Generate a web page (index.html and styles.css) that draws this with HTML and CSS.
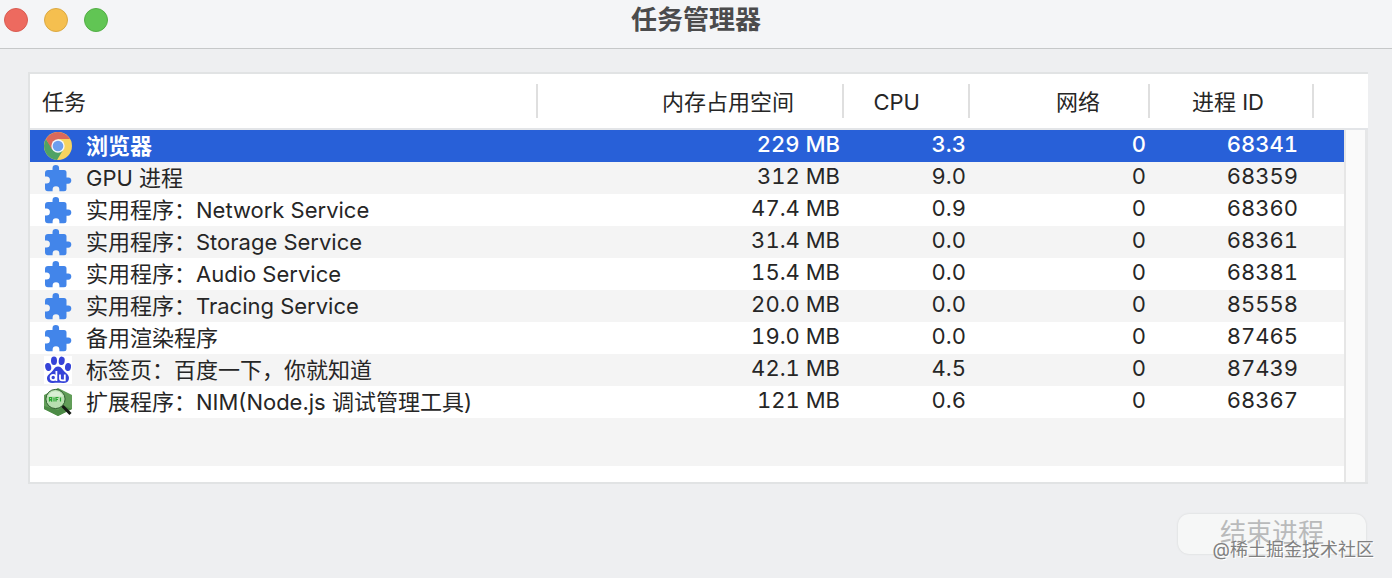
FILE: index.html
```html
<!DOCTYPE html>
<html lang="zh-CN">
<head>
<meta charset="utf-8">
<title>任务管理器</title>
<link rel="stylesheet" href="styles.css">
</head>
<body>
<svg class="defs" aria-hidden="true">
  <symbol id="puzzle" viewBox="0 0 28 28">
    <path fill="#4285ea" d="M4 6h4.500V4.400a3.300 3.300 0 0 1 6.600 0V6H20q2.500 0 2.500 2.500v5h1.700a3.100 3.100 0 0 1 0 6.200h-1.700v5q0 2.500-2.500 2.500h-4.600v-1.500a3.400 3.400 0 0 0-6.800 0v1.500H4q-3 0-3-3v-4.600h1.400a3.500 3.500 0 0 0 0-7H1V9q0-3 3-3z"/>
  </symbol>
</svg>
<header class="titlebar">
  <div class="lights">
    <button class="light close" aria-label="关闭"></button>
    <button class="light minimize" aria-label="最小化"></button>
    <button class="light expand" aria-label="缩放"></button>
  </div>
  <h1 class="title">任务管理器</h1>
</header>
<main class="content">
  <div class="frame">
    <table class="tasks">
      <colgroup>
        <col><col class="c-memory"><col class="c-cpu"><col class="c-network"><col class="c-pid"><col class="c-rest"><col class="c-scroll">
      </colgroup>
      <thead>
        <tr><th class="name" scope="col">任务</th><th scope="col">内存占用空间</th><th scope="col">CPU</th><th scope="col">网络</th><th scope="col">进程 ID</th><td class="head-rest" colspan="2"></td></tr>
      </thead>
      <tbody>
        <tr class="selected">
          <td><div class="task"><svg class="icon" viewBox="0 0 28 28"><circle cx="14" cy="14" r="14" fill="#f6d35f"/><path fill="#4fa265" d="M1.900 7A14 14 0 0 0 13 28l6.500-10.800L14 14l-5.500 3z"/><path fill="#d9695b" d="M1.900 7 8 17.500 14 7h12.100A14 14 0 0 0 1.900 7z"/><circle cx="14" cy="14" r="6.700" fill="#f4f6fa"/><circle cx="14" cy="14" r="5.300" fill="#6b9eee"/></svg>浏览器</div></td>
          <td class="num">229 MB</td><td class="num">3.3</td><td class="num">0</td><td class="num pid">68341</td><td></td>
          <td class="scroll" rowspan="11"></td>
        </tr>
        <tr><td><div class="task"><svg class="icon"><use href="#puzzle"/></svg>GPU 进程</div></td><td class="num">312 MB</td><td class="num">9.0</td><td class="num">0</td><td class="num pid">68359</td><td></td></tr>
        <tr><td><div class="task"><svg class="icon"><use href="#puzzle"/></svg>实用程序：Network Service</div></td><td class="num">47.4 MB</td><td class="num">0.9</td><td class="num">0</td><td class="num pid">68360</td><td></td></tr>
        <tr><td><div class="task"><svg class="icon"><use href="#puzzle"/></svg>实用程序：Storage Service</div></td><td class="num">31.4 MB</td><td class="num">0.0</td><td class="num">0</td><td class="num pid">68361</td><td></td></tr>
        <tr><td><div class="task"><svg class="icon"><use href="#puzzle"/></svg>实用程序：Audio Service</div></td><td class="num">15.4 MB</td><td class="num">0.0</td><td class="num">0</td><td class="num pid">68381</td><td></td></tr>
        <tr><td><div class="task"><svg class="icon"><use href="#puzzle"/></svg>实用程序：Tracing Service</div></td><td class="num">20.0 MB</td><td class="num">0.0</td><td class="num">0</td><td class="num pid">85558</td><td></td></tr>
        <tr><td><div class="task"><svg class="icon"><use href="#puzzle"/></svg>备用渲染程序</div></td><td class="num">19.0 MB</td><td class="num">0.0</td><td class="num">0</td><td class="num pid">87465</td><td></td></tr>
        <tr>
          <td><div class="task"><svg class="icon" viewBox="0 0 28 28"><path fill="#fff" d="M0 0h28v28H0z"/><g fill="#3543d8"><ellipse cx="4.200" cy="11" rx="3" ry="4" transform="rotate(-12 4.200 11)"/><ellipse cx="10" cy="4.800" rx="3" ry="4.200"/><ellipse cx="17.700" cy="4.800" rx="3" ry="4.200" transform="rotate(8 17.700 4.800)"/><ellipse cx="24" cy="11" rx="3" ry="4" transform="rotate(8 24 11)"/><path d="M14 10.500c3.500 0 4.500 3.500 7.500 6 3 2.400 4 4.500 3.300 7-.8 3-3.300 3.700-5.800 3.500-3-.4-7-.4-10 0-3 .3-5.500-.8-6-4-.4-2.800 1.500-4.600 4-6.500 3-2.500 3.500-6 7-6z"/></g><g fill="none" stroke="#fff" stroke-width="1.800"><circle cx="9.200" cy="21.500" r="2.600"/><path d="M12.400 15v9.900M16 18.500v4q0 1.900 2 1.900h2.800v-5.900"/></g></svg>标签页：百度一下，你就知道</div></td>
          <td class="num">42.1 MB</td><td class="num">4.5</td><td class="num">0</td><td class="num pid">87439</td><td></td>
        </tr>
        <tr>
          <td><div class="task"><svg class="icon" viewBox="0 0 28 28"><path fill="#619d58" d="m14 0 14 7v14l-14 7-14-7V7z"/><path fill="#4c8b46" d="m0 18 14 4 6-4 8 3-14 7-14-7z"/><circle cx="11.500" cy="11" r="9.600" fill="#b8dfb0" stroke="#315e31" stroke-width="1"/><path d="M4 8.500a8 8 0 0 1 15 0z" fill="#d9efd4"/><path d="m18.500 18 8 8" stroke="#151b14" stroke-width="3"/><path d="M5.500 13.500v-4h2.200v2H5.500m1 0 1.700 2M10 9.500v4m2 0v-4h2.500m-2.500 2h2M16.500 9.500v4" fill="none" stroke="#29a631" stroke-width="1.200"/></svg>扩展程序：NIM(Node.js 调试管理工具)</div></td>
          <td class="num">121 MB</td><td class="num">0.6</td><td class="num">0</td><td class="num pid">68367</td><td></td>
        </tr>
        <tr class="blank"><td colspan="6"></td></tr>
        <tr class="blank-end"><td colspan="6"></td></tr>
      </tbody>
    </table>
  </div>
  <footer class="actions">
    <button class="end" disabled>结束进程</button>
    <span class="watermark">@稀土掘金技术社区</span>
  </footer>
</main>
</body>
</html>
```
FILE: styles.css
```css
* { box-sizing: border-box; }
body {
  margin: 0;
  min-height: 100vh;
  background: #eeeff1;
  color: #262626;
  font: 22px/32px Inter, "Noto Sans CJK SC", sans-serif;
}
.defs { display: none; }
.titlebar {
  display: grid;
  grid-template-columns: 1fr auto 1fr;
  align-items: start;
  height: 49px;
  padding: 0 4px;
  background: #f4f5f7;
  border-bottom: 1px solid #c6c8c9;
}
.lights { display: flex; gap: 16px; padding-top: 8px; }
.light {
  width: 24px;
  height: 24px;
  padding: 0;
  border: 1px solid;
  border-radius: 50%;
}
.close { background: #ed6a5f; border-color: #d95c52; }
.minimize { background: #f5bf4f; border-color: #dba943; }
.expand { background: #61c554; border-color: #52ae45; }
.title {
  margin: 0;
  padding-top: 4px;
  color: #4b4b4c;
  font-size: 26px;
  line-height: 32px;
  font-weight: 700;
}
.content { padding: 23px 24px 0 28px; }
.frame {
  border: 2px solid #e1e3e4;
  border-right: 0;
  background: #fff;
}
.tasks {
  width: 100%;
  table-layout: fixed;
  border-collapse: separate;
  border-spacing: 0;
}
.c-memory { width: 306px; }
.c-cpu { width: 126px; }
.c-network { width: 180px; }
.c-pid { width: 164px; }
.c-rest { width: 30px; }
.c-scroll { width: 24px; }
td, th { padding: 0; }
th, .head-rest {
  height: 56px;
  border-bottom: 2px solid #e3e5e8;
}
th {
  padding: 2px 50px 0 0;
  background: linear-gradient(#dfdfdf, #dfdfdf) right center / 2px 34px no-repeat;
  text-align: right;
  font-weight: 400;
}
th.name { padding: 2px 0 0 12px; text-align: left; }
tbody tr { height: 32px; }
tbody tr:nth-child(even) { background: #f4f4f4; }
.task {
  display: flex;
  align-items: center;
  gap: 14px;
  height: 32px;
  padding-left: 14px;
  white-space: nowrap;
}
.icon { flex: none; width: 28px; height: 28px; }
.num {
  padding: 0 4px 4px 0;
  text-align: right;
  line-height: 28px;
  font-variant-numeric: tabular-nums;
}
.pid { padding-right: 16px; }
tbody .selected { background: #2860d8; color: #fff; font-weight: 500; }
.selected .task { font-weight: 700; }
tbody .blank { height: 48px; }
tbody .blank-end { height: 16px; background: #fff; }
.scroll {
  background: #fafafa;
  border-left: 2px solid #e6e6e6;
  border-right: 3px solid #e6e7e8;
}
.actions {
  position: relative;
  display: flex;
  justify-content: flex-end;
  padding: 30px 2px 24px;
}
.end {
  width: 188px;
  height: 40px;
  padding: 0 0 2px;
  border: 0;
  border-radius: 11px;
  background: #f6f7f7;
  box-shadow: 0 0 2px #cfd1d2;
  color: #b9babb;
  font: 26px/36px Inter, "Noto Sans CJK SC", sans-serif;
}
.watermark {
  position: absolute;
  right: -6px;
  top: 54px;
  color: #808080;
  font-size: 18px;
  line-height: 24px;
  text-shadow: 1px 1px 0 #fff;
}
```
